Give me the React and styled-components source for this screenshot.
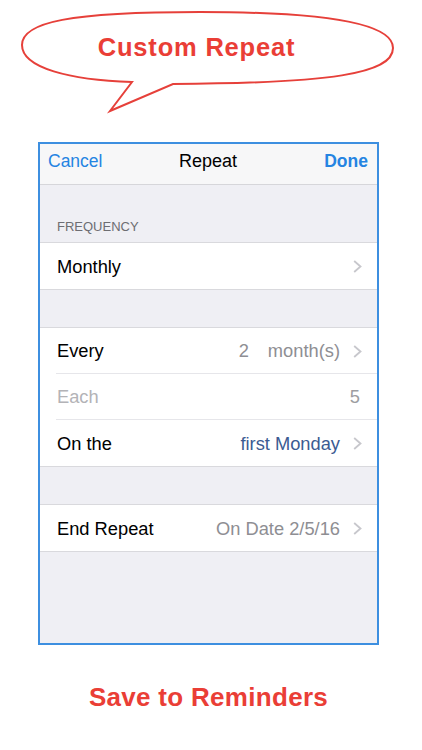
import React from 'react';
import styled, { createGlobalStyle } from 'styled-components';

const GlobalStyle = createGlobalStyle`
	body {
		margin: 0;
		background: #ffffff;
		font-family: 'Liberation Sans', Arial, sans-serif;
	}
`;

const Page = styled.div`
	width: 422px;
	height: 750px;
	overflow: hidden;
	background: #ffffff;
`;

const Bubble = styled.div`
	position: relative;
	height: 120px;
	margin-bottom: 22px;
`;

const BubbleShape = styled.svg`
	position: absolute;
	top: 0;
	left: 0;
`;

const BubbleTitle = styled.h1`
	position: relative;
	margin: 0;
	padding: 32px 29px 0 0;
	text-align: center;
	font-size: 25.5px;
	line-height: 30px;
	font-weight: 700;
	letter-spacing: 0.8px;
	color: #ea3e36;
`;

const Phone = styled.div`
	box-sizing: border-box;
	width: 341px;
	height: 503px;
	margin-left: 38px;
	border: 2px solid #3d8fe0;
	background: #efeff4;
	display: flex;
	flex-direction: column;
`;

const NavBar = styled.div`
	box-sizing: border-box;
	height: 41px;
	display: flex;
	align-items: center;
	justify-content: space-between;
	padding: 0 9px 6px 8px;
	background: #f7f7f8;
	border-bottom: 1px solid #d6d6da;
	font-size: 17.5px;
`;

const NavButton = styled.span`
	color: #2584e2;
	font-weight: ${props => (props.bold ? 700 : 400)};
	width: 60px;
	text-align: ${props => (props.bold ? 'right' : 'left')};
`;

const NavTitle = styled.span`
	color: #000000;
	font-size: 18px;
`;

const SectionHeader = styled.div`
	height: 50px;
	display: flex;
	align-items: flex-end;
	padding: 0 0 7px 17px;
	font-size: 13px;
	line-height: 16px;
	color: #6d6d72;
	text-transform: uppercase;
`;

const Spacer = styled.div`
	height: 37px;
`;

const Group = styled.div`
	background: #ffffff;
	border-top: 1px solid #d9d9dd;
	border-bottom: 1px solid #d9d9dd;
`;

const Row = styled.div`
	box-sizing: border-box;
	height: 46px;
	margin-left: 16px;
	padding: 1px ${props => (props.noChevron ? 17 : 15)}px 0 1px;
	display: flex;
	align-items: center;
	font-size: 18.3px;
	border-bottom: 1px solid #e6e6ea;
	&:last-child {
		border-bottom: none;
		height: 46px;
	}
`;

const Label = styled.span`
	flex: 1;
	color: ${props => (props.dim ? '#b3b3b7' : '#000000')};
`;

const Value = styled.span`
	color: ${props => props.color || '#8e8e93'};
	margin-left: ${props => props.gap || 0}px;
`;

const Chevron = styled.svg`
	margin-left: 13px;
	flex-shrink: 0;
`;

const Footer = styled.div`
	margin-top: 37px;
	padding-right: 5px;
	text-align: center;
	font-size: 26px;
	line-height: 30px;
	font-weight: 700;
	letter-spacing: 0.3px;
	color: #ea3e36;
`;

const Arrow = () => (
	<Chevron width="9" height="13" viewBox="0 0 9 13">
		<polyline points="1.2,1 7.5,6.5 1.2,12" fill="none" stroke="#c7c7cc" strokeWidth="1.8" />
	</Chevron>
);

const App = () => {
	return (
		<React.Fragment>
			<GlobalStyle />
			<Page>
				<Bubble>
					<BubbleShape width="422" height="120" viewBox="0 0 422 120">
						<path
							d="M132,82 C70,80 22,68 22,45 C22,22 70,12 200,12 C330,12 393,24 393,48 C393,74 330,83 173,84 L110,111 Z"
							fill="#ffffff"
							stroke="#e6403a"
							strokeWidth="2"
							strokeLinejoin="miter"
						/>
					</BubbleShape>
					<BubbleTitle>Custom Repeat</BubbleTitle>
				</Bubble>

				<Phone>
					<NavBar>
						<NavButton>Cancel</NavButton>
						<NavTitle>Repeat</NavTitle>
						<NavButton bold>Done</NavButton>
					</NavBar>

					<SectionHeader>Frequency</SectionHeader>
					<Group>
						<Row>
							<Label>Monthly</Label>
							<Arrow />
						</Row>
					</Group>

					<Spacer />
					<Group>
						<Row>
							<Label>Every</Label>
							<Value>2</Value>
							<Value gap={19}>month(s)</Value>
							<Arrow />
						</Row>
						<Row noChevron>
							<Label dim>Each</Label>
							<Value color="#9d9da2">5</Value>
						</Row>
						<Row>
							<Label>On the</Label>
							<Value color="#3b5b92">first Monday</Value>
							<Arrow />
						</Row>
					</Group>

					<Spacer />
					<Group>
						<Row>
							<Label>End Repeat</Label>
							<Value>On Date 2/5/16</Value>
							<Arrow />
						</Row>
					</Group>
				</Phone>

				<Footer>Save to Reminders</Footer>
			</Page>
		</React.Fragment>
	);
};

export default App;
